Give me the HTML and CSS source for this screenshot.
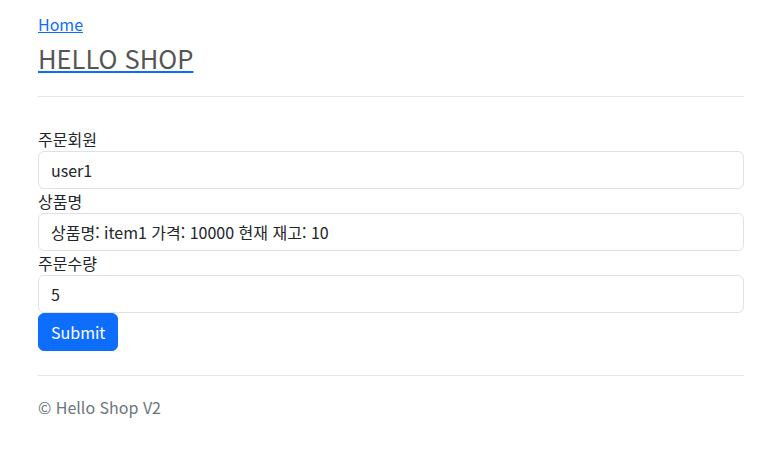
FILE: index.html
```html
<!DOCTYPE html>
<html lang="ko">
<head>
<meta charset="utf-8">
<title>HELLO SHOP</title>
<link rel="stylesheet" href="styles.css">
</head>
<body>
<div class="container">
  <header class="header">
    <a class="home-link" href="#">Home</a>
    <a class="brand" href="#"><span class="brand-text">HELLO SHOP</span></a>
  </header>
  <hr class="rule">
  <form class="order-form">
    <label class="field-label" for="member">주문회원</label>
    <input class="field" id="member" type="text" value="user1">
    <label class="field-label" for="item">상품명</label>
    <input class="field" id="item" type="text" value="상품명: item1 가격: 10000 현재 재고: 10">
    <label class="field-label" for="count">주문수량</label>
    <input class="field" id="count" type="text" value="5">
    <button class="submit" type="button">Submit</button>
  </form>
  <hr class="rule footer-rule">
  <footer class="footer">© Hello Shop V2</footer>
</div>
</body>
</html>
```
FILE: styles.css
```css
* { box-sizing: border-box; }
html, body { margin: 0; padding: 0; background: #fff; }
body {
  font-family: "Noto Sans CJK KR", "Noto Sans", sans-serif;
  font-size: 16px;
  line-height: 24px;
  color: #212529;
}
.container {
  padding: 12px 16px 0 38px;
}
.header {
  display: flex;
  flex-direction: column;
  align-items: flex-start;
}
.home-link {
  color: #0d6efd;
  text-decoration: underline;
  line-height: 24px;
}
.brand {
  color: #0d6efd;
  text-decoration: underline;
  font-size: 25.5px;
  line-height: 34px;
  margin-top: 5px;
}
.brand-text { color: #555; }
.rule {
  border: 0;
  border-top: 1px solid #e5e5e5;
  margin: 21px 0 0;
  height: 0;
}
.order-form {
  display: flex;
  flex-direction: column;
  align-items: stretch;
  margin-top: 30px;
}
.field-label {
  display: block;
  line-height: 24px;
}
.field {
  display: block;
  width: 100%;
  height: 38px;
  padding: 6px 12px;
  font: inherit;
  color: #212529;
  border: 1px solid #dee2e6;
  border-radius: 6px;
  background: #fff;
}
.submit {
  align-self: flex-start;
  height: 38px;
  padding: 6px 12px;
  font: inherit;
  color: #fff;
  background: #0d6efd;
  border: 1px solid #0d6efd;
  border-radius: 6px;
}
.footer-rule { margin-top: 24px; }
.footer {
  margin-top: 19px;
  color: #6c757d;
  line-height: 24px;
}
```
